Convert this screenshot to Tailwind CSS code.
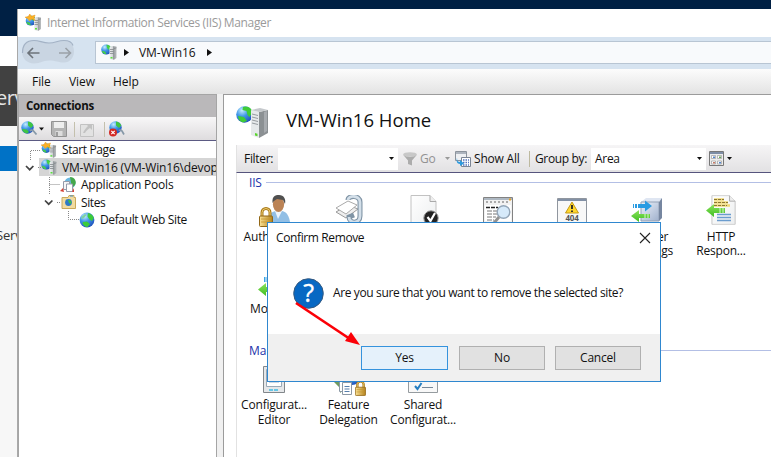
<!DOCTYPE html>
<html lang="en">
<head>
<meta charset="utf-8">
<title>Internet Information Services (IIS) Manager</title>
<script src="https://cdn.jsdelivr.net/npm/@tailwindcss/browser@4"></script>
</head>
<body class="w-[771px] h-[457px] overflow-hidden bg-white font-['Open_Sans','Noto_Sans',sans-serif] text-[12px] leading-[15px] tracking-[-.2px] text-[#111]">
<svg class="absolute w-0 h-0" aria-hidden="true">
  <defs>
    <radialGradient id="gb" cx=".35" cy=".25" r=".9"><stop offset="0" stop-color="#c5eeff"/><stop offset=".4" stop-color="#4298e8"/><stop offset="1" stop-color="#163fb0"/></radialGradient>
    <linearGradient id="sv" x1="0" x2="1"><stop offset="0" stop-color="#f0f2f3"/><stop offset=".5" stop-color="#cdd1d3"/><stop offset=".55" stop-color="#94999c"/><stop offset="1" stop-color="#b9bcbe"/></linearGradient>
    <linearGradient id="gr" x1="0" y1="0" x2="0" y2="1"><stop offset="0" stop-color="#8be35c"/><stop offset="1" stop-color="#3fbe22"/></linearGradient>
    <linearGradient id="gd" x1="0" x2="1"><stop offset="0" stop-color="#fbe397"/><stop offset="1" stop-color="#b3811c"/></linearGradient>
    <linearGradient id="pn" x1="0" y1="0" x2="1" y2="1"><stop offset="0" stop-color="#fff"/><stop offset="1" stop-color="#eceeef"/></linearGradient>
    <linearGradient id="bx" x1="0" y1="0" x2="1" y2="1"><stop offset="0" stop-color="#eef2fa"/><stop offset="1" stop-color="#9fb0cc"/></linearGradient>
    <symbol id="globe" viewBox="0 0 16 16"><circle cx="8" cy="8" r="7.400" fill="url(#gb)"/><path d="M9 1c3 .6 5.200 2.500 5.800 5l-1.800 3-2.500-1.500L8.500 4.500zM4 10l4-.5 3 2.500L8.500 15C6 15 4 13 3.500 11z" fill="#3ccb3a"/><path d="M3 4.500 6 2l1.500 1L5 6 2 7z" fill="#7ed2a0"/></symbol>
    <symbol id="server" viewBox="0 0 16 16"><circle cx="5.200" cy="5.600" r="5" fill="url(#gb)"/><path d="M5.500.800c2 0 4 1.200 4.400 3L8 6 6 4zM1 7l3 .5 1.500 2.800C3 10.300 1 8.500.800 7z" fill="#45d045"/><path d="M8.500 3.500 10.500 2 15.500 2.500v11.500L13 15.800l-4.500-.8z" fill="url(#sv)"/><path d="M9 5.500h3.500M9 7.500h3.500M9 9.500h3.500" stroke="#777c80" stroke-width=".7"/><path d="M13 4.500l2.500-.7" stroke="#7d8286" stroke-width=".7"/><path d="M9.500 13h2v1.500h-2z" fill="#5be23c"/></symbol>
    <symbol id="world" viewBox="0 0 17 16"><circle cx="6.500" cy="6.500" r="6.200" fill="url(#gb)"/><path d="M7 .5c2.500.3 4.500 1.800 5.300 4L10 7 7 4.500zM2 8l4 .5L8 11l-2 1.500C3.500 12.300 1.500 10.500 1 8z" fill="#3fc543"/></symbol>
    <symbol id="doc" viewBox="0 0 30 32"><path d="M1 .5h19l6 6V31.500H1z" fill="url(#pn)" stroke="#c2c2c2"/><path d="M20 .5v6h6" fill="#eee" stroke="#aaa"/></symbol>
    <symbol id="lock" viewBox="0 0 14 20"><path d="M3 10V5.500a4 4 0 0 1 8 0V10" fill="none" stroke="#a87918" stroke-width="3"/><path d="M3 10V5.500a4 4 0 0 1 8 0V10" fill="none" stroke="#f0ce72"/><rect x=".5" y="9" width="13" height="10.500" rx="1" fill="url(#gd)" stroke="#926716"/><path d="M2 12h10M2 15h10" stroke="#c4942e" stroke-width=".8"/></symbol>
    <path id="star" d="M0 3 3 2.400 4.500 0 6 2l3.500-1L8.500 3.800l1 2.200-3-1.200L4 6.500 3.200 4.800z" fill="#fbb026" stroke="#e58f12" stroke-width=".4"/>
  </defs>
</svg>

<div class="relative w-[771px] h-[457px] overflow-hidden flex flex-col">
  <div class="h-[9px] shrink-0 bg-[#002044]"></div>
  <div class="flex flex-1 min-h-0">
    <!-- page behind the window -->
    <aside class="w-[17px] shrink-0 flex flex-col overflow-hidden whitespace-nowrap bg-[#f7f7f7]">
      <div class="h-[27px] bg-[#002044]"></div>
      <div class="h-[30px] bg-white"></div>
      <div class="h-[60px] bg-[#414141] text-[#e4e4e4] text-[20px] leading-[64px] tracking-[-.5px]"><span class="-ml-[4px]">erver</span></div>
      <div class="h-[20px]"></div>
      <div class="h-[25px] bg-[#0072c6]"></div>
      <div class="pt-[57px] text-[13px] text-[#333]"><span class="-ml-[4px]">Server</span></div>
    </aside>

    <main class="flex-1 min-w-0 flex flex-col border-l border-[#a9a9a9] bg-[#f0f0f0]">
      <header class="h-[28px] shrink-0 bg-white flex items-center pl-[7px] pb-px gap-[5px] text-[#9a9a9a]">
        <svg class="w-[17px] h-[17px]" viewBox="0 0 16 16"><use href="#server" y="1" width="16" height="15"/><use href="#star"/></svg>
        <span class="tracking-[-.36px]">Internet Information Services (IIS) Manager</span>
      </header>

      <div class="h-[32px] shrink-0 bg-[#d6e3f0] flex items-start">
        <svg class="w-[77px] h-[32px]" viewBox="18 37 77 32">
          <path d="M34 40.500c6 0 8 2.500 15 2.500s8-2.500 15-2.500c7 0 10 5 10 11s-4 11-10 11c-6 0-8-2-15-2s-8 3-15 3c-7 0-12-5-12-12s5-11 12-11z" fill="#c9d5e2"/>
          <path d="M22.500 53c0-8 4-12.500 11.500-12.500 6 0 8 2.500 15 2.500s8-2.500 15-2.500c5 0 8 2 9 5" fill="none" stroke="#a3b2c5" stroke-width="1.200"/>
          <path d="M39.500 53H28M33 48l-5 5 5 5" fill="none" stroke="#6c737a" stroke-width="1.600"/>
          <path d="M59 53h11.500M65.500 48l5 5-5 5" fill="none" stroke="#9aa1a8" stroke-width="1.600"/>
        </svg>
        <div class="mt-[4px] flex-1 h-[23px] bg-[#f8fafc] border border-r-0 border-[#b8c5d3] flex items-center pl-[5px] pb-px">
          <svg class="w-[16px] h-[16px]"><use href="#server"/></svg>
          <svg class="ml-[7px] w-[5px] h-[7px]" viewBox="0 0 5 7"><path d="M0 0 5 3.500 0 7z" fill="#111"/></svg>
          <span class="ml-[10px] w-[57px] whitespace-nowrap tracking-[-.05px]">VM-Win16</span>
          <svg class="ml-[11px] w-[5px] h-[7px]" viewBox="0 0 5 7"><path d="M0 0 5 3.500 0 7z" fill="#111"/></svg>
        </div>
      </div>

      <nav class="h-[25px] shrink-0 bg-linear-to-b from-[#fcfcfc] to-[#e3e3e3] flex items-center pl-[14px] pb-px tracking-[-.05px]">
        <span class="w-[37px]">File</span><span class="w-[44px]">View</span><span>Help</span>
      </nav>

      <div class="flex flex-1 min-h-0">
        <!-- connections -->
        <section class="w-[199px] shrink-0 flex flex-col bg-white border-x border-t border-[#a5a5a5] overflow-hidden">
          <div class="h-[22px] shrink-0 bg-[#bab8ba] pl-[7px] font-bold text-[11.500px] leading-[22px] tracking-[-.3px]">Connections</div>
          <div class="h-[24px] shrink-0 bg-linear-to-b from-[#f8f7f8] to-[#dedcde] border-b border-[#5b5a83]">
            <svg class="w-[110px] h-[23px]" viewBox="19 117 110 23">
              <g transform="translate(21 121)"><svg width="17" height="16"><use href="#world"/></svg></g>
              <path d="M30 131c1.500-1.500 3-1 3.500 0l3 3.500" fill="none" stroke="#8799a8" stroke-width="1.800"/>
              <path d="M39 127.500h5l-2.500 3z" fill="#111"/>
              <path d="M51.500 121.500h15v15h-13l-2-2z" fill="#b4b4b4" stroke="#939393"/><path d="M54 122h10v6H54z" fill="#eee"/><path d="M55.500 131h7v5h-7z" fill="#ddd"/><path d="M57 132v4" stroke="#888" stroke-width="1.500"/>
              <path d="M74.500 122v15M104.500 122v15" stroke="#c4c0ad"/>
              <path d="M80.500 124.500h13v12h-13z" fill="#e2e2e2" stroke="#c2c2c2"/><path d="M83 133c1-3 3-5 5-7l-2-2h6v6l-2-2c-2 1-4 3-5 5z" fill="#c2c2c2"/>
              <g transform="translate(109 121)"><svg width="17" height="16"><use href="#world"/></svg></g>
              <path d="M119 131c1-1.500 2.500-1 3 0l2 3.500" fill="none" stroke="#8799a8" stroke-width="1.700"/>
              <circle cx="113" cy="132.500" r="4" fill="#d32924"/><path d="m111.300 130.800 3.400 3.400m0-3.400-3.400 3.400" stroke="#fff" stroke-width="1.200"/>
            </svg>
          </div>
          <div class="relative whitespace-nowrap">
            <div class="h-[17px] flex items-center pl-[22px] gap-[5px]"><svg class="w-[16px] h-[16px] shrink-0" viewBox="0 0 16 16"><use href="#server" y="1" width="16" height="15"/><use href="#star"/></svg><span class="tracking-[-.4px]">Start Page</span></div>
            <div class="h-[18px] ml-[20px] bg-[#d5d5d5] flex items-center pl-[2px] gap-[5px]"><svg class="w-[16px] h-[16px] shrink-0"><use href="#server"/></svg><span class="tracking-[-.17px]">VM-Win16 (VM-Win16\devops)</span></div>
            <div class="h-[17px] flex items-center pl-[41px] gap-[4px]">
              <svg class="w-[17px] h-[16px]" viewBox="0 0 17 16"><circle cx="10" cy="6" r="5.500" fill="#6ab8e0"/><path d="M10 0c5 0 7 5 5 8l-3 3z" fill="#45a84b"/><path d="M3.500 4.500h6v8h-6z" fill="#f5f6f8" stroke="#959baa"/><path d="M6.500 7h6v7.500h-6z" fill="#fff" stroke="#959baa"/><path d="m0 14 3-3 1 4zm12 1 2-4v4z" fill="#d64034"/></svg><span class="tracking-[-.22px]">Application Pools</span></div>
            <div class="h-[18px] flex items-center pl-[42px] gap-[4px]">
              <svg class="w-[16px] h-[16px]" viewBox="0 0 16 16"><path d="M1 3.500h6l1-2h5v2h1.500v11H1z" fill="#f1dba0" stroke="#c9a95a"/><path d="M9 2h3" stroke="#4b90ca"/><circle cx="7.500" cy="8.500" r="3.400" fill="#2e79c6"/><path d="M7 6c3 0 4 2 3 4L8 9z" fill="#42bf42"/></svg><span class="tracking-[-.4px]">Sites</span></div>
            <div class="h-[17px] flex items-center pl-[60px] gap-[5px]"><svg class="w-[16px] h-[16px]"><use href="#globe"/></svg><span class="tracking-[-.37px]">Default Web Site</span></div>
            <svg class="absolute left-0 top-0 w-[62px] h-[90px]" viewBox="19 141 62 90" fill="none">
              <path d="M30.500 160v-9.500H41M38 167.500h3M49.500 177v17M49.500 184.500H60M57 202.500h4M68.500 211v8.500H79" stroke="#888" stroke-dasharray="1 1"/>
              <path d="m26 166 3.700 3.700 3.700-3.700M45 200.500l3.700 3.700 3.700-3.700" stroke="#444" stroke-width="1.700"/>
            </svg>
          </div>
        </section>

        <!-- feature view -->
        <section class="ml-[6px] flex-1 min-w-0 bg-white border-l border-t border-[#9b9b9b] flex flex-col pl-[12px]">
          <div class="h-[50px] shrink-0 flex items-center">
            <svg class="w-[35px] h-[34px] mt-[3px]" viewBox="0 0 35 34">
              <circle cx="8.500" cy="9.500" r="8.300" fill="url(#gb)"/><path d="M7 2c5-2 9 2 9.500 5l-3 5-2-2-1-4-4-1zM2 11l6 1 3 4-4 1.500c-3-1-5-3-5-6.500z" fill="#3fcb38"/>
              <path d="m15 5 8 2v26l-8-3z" fill="#e6e9eb"/><path d="m23 7 9-2v23l-9 5z" fill="#8b9093"/><path d="m15 5 9-2L32 5l-9 2z" fill="#c5c9cc"/><path d="m16 9 6 1.500M16 12l6 1.500M16 15l6 1.500M16 18l6 1.500" stroke="#969b9f"/><path d="m28 7 3-1v20l-3 2z" fill="#a7abaf"/><path d="m19 28 2.500.7v2.500L19 30.500z" fill="#59d52c"/>
            </svg>
            <h1 class="ml-[15px] text-[18.500px] leading-[24px] tracking-[.02px]">VM-Win16 Home</h1>
          </div>
          <div class="h-[28px] shrink-0 border-l border-[#e2e2e2] bg-linear-to-b from-[#f6f5f6] to-[#e2e1e3] border-b border-b-[#55547d] flex items-center whitespace-nowrap">
            <span class="ml-[7px] w-[34px] tracking-[-.3px]">Filter:</span>
            <div class="w-[120px] h-[22px] bg-white flex items-center justify-end pr-[4px]"><svg class="w-[5px] h-[3px]" viewBox="0 0 5 3"><path d="M0 0h5L2.500 3z" fill="#111"/></svg></div>
            <svg class="ml-[5px] w-[14px] h-[14px]" viewBox="0 0 14 14"><ellipse cx="7" cy="2.500" rx="6.800" ry="2.300" fill="#c8c8c8"/><path d="M.3 3 5 8.500V12l4 1.500v-5L13.700 3C11 5.500 3 5.500.3 3z" fill="#acacac"/></svg>
            <span class="ml-[3px] w-[25px] text-[#929292]">Go</span>
            <svg class="w-[5px] h-[3px]" viewBox="0 0 5 3"><path d="M0 0h5L2.500 3z" fill="#999"/></svg>
            <svg class="ml-[5px] w-[16px] h-[16px]" viewBox="0 0 16 16"><path d="M.5.500h11v9H.500z" fill="#eef0f3" stroke="#8c939c"/><path d="M1 2h10" stroke="#adb4be" stroke-width="2"/><path d="M6.500 6.500h9v9h-9z" fill="#fff" stroke="#7b8594"/><path d="M8 9h6M8 11.500h6M8 14h6" stroke="#5473bc" stroke-width="1.500" stroke-dasharray="1.500 1"/><path d="M2 7c0 3 1 4 3 4V9l4 3.500L5 15v-2c-3 0-4-3-3-6z" fill="#2d9ade"/></svg>
            <span class="ml-[3px] w-[55px] tracking-[-.2px]">Show All</span>
            <div class="w-px h-[16px] bg-[#bdb99f]"></div>
            <span class="ml-[5px] w-[56px] tracking-[-.35px]">Group by:</span>
            <div class="w-[115px] h-[22px] bg-white flex items-center justify-between pl-[4px] pr-[4px]"><span class="tracking-[-.3px]">Area</span><svg class="w-[5px] h-[3px]" viewBox="0 0 5 3"><path d="M0 0h5L2.500 3z" fill="#111"/></svg></div>
            <svg class="ml-[3px] w-[15px] h-[15px]" viewBox="0 0 15 15"><path d="M.5.500h14v14H.500z" fill="#ececec" stroke="#777"/><path d="M1 2h13" stroke="#7d8da6" stroke-width="2"/><path d="M2.500 4.500h4v3h-4zM8.500 4.500h4v3h-4zM2.500 10h4v3h-4zM8.500 10h4v3h-4z" fill="#fff" stroke="#8e8e8e" stroke-width=".6"/><path d="M4 5.500h2v1.500H4zM10 11h2v1.500h-2z" fill="#5385cf"/><path d="M10 5.500h2v1.500h-2z" fill="#68a957"/><path d="M4 11h2v1.500H4z" fill="#c77b67"/></svg>
            <svg class="ml-[3px] w-[5px] h-[3px]" viewBox="0 0 5 3"><path d="M0 0h5L2.500 3z" fill="#111"/></svg>
          </div>

          <div class="flex-1 border-l border-[#e2e2e2] flex flex-col">
            <div class="h-[19px] shrink-0 flex items-center pl-[12px] gap-[4px] text-[#2233aa]"><span class="leading-[19px]">IIS</span><i class="h-px flex-1 bg-[#b3bfe5]"></i></div>
            <div class="pt-[3px] h-[73px] shrink-0 flex text-center whitespace-nowrap">
              <div class="w-[74px] shrink-0 flex flex-col items-center">
                <svg class="w-[34px] h-[34px]" viewBox="0 0 34 34"><path d="M11 34V23c1-5 5-7 9-7h5c5 1 7 5 8 11v7z" fill="#92bfe5"/><path d="m18 16 3 8 4-8z" fill="#eef5fb"/><ellipse cx="21.500" cy="9.500" rx="5.600" ry="7.500" fill="#bb8356"/><path d="M15.500 8C15 1 18 0 22 0c5 0 7 4 6 9l-2-4-6-1-3 2z" fill="#505050"/><svg x="2" y="12" width="14" height="20"><use href="#lock"/></svg></svg>
                <span class="leading-[14px] pt-[1px]">Authentic...</span>
              </div>
              <div class="w-[75px] shrink-0 flex flex-col items-center">
                <svg class="w-[32px] h-[34px]" viewBox="0 0 32 34"><path d="m3 17 12-7 10 4-12 9z" fill="#eee" stroke="#9a9a9a"/><path d="m3 13 12-7 9 4-11 9z" fill="#fff" stroke="#aaa"/><path d="M15 5c0-5 12-5 12 2v14c0 8-11 8-11 1l5-2" fill="none" stroke="#8094a5" stroke-width="5"/><path d="M15 5c0-5 12-5 12 2v14c0 8-11 8-11 1" fill="none" stroke="#d3dfe9" stroke-width="2.800"/></svg>
              </div>
              <div class="w-[74px] shrink-0 flex flex-col items-center">
                <svg class="w-[32px] h-[34px]" viewBox="0 0 32 34"><svg x="3" y="0" width="27" height="32" viewBox="0 0 27 32"><use href="#doc" width="30" height="32"/></svg><circle cx="24" cy="23" r="7.200" fill="#222" stroke="#999"/><path d="m20.500 22 3 4 4.500-8" fill="none" stroke="#fff" stroke-width="2.200"/></svg>
              </div>
              <div class="w-[75px] shrink-0 flex flex-col items-center">
                <svg class="w-[32px] h-[34px]" viewBox="0 0 32 34"><path d="M1.500 2.500h29v25h-29z" fill="#f2f2f2" stroke="#828282"/><path d="M2 4h28" stroke="#aeb8c2" stroke-width="2"/><path d="M4 7h22" stroke="#aaa" stroke-width="2" stroke-dasharray="2 2"/><path d="M3 10h26v16H3z" fill="#fff"/><path d="M4 12.500h12" stroke="#222" stroke-width="1.500" stroke-dasharray="4 1"/><path d="M5 16h10M5 19h10M5 22h9M5 25h7" stroke="#777" stroke-dasharray="5 1"/><circle cx="21.500" cy="17" r="6.300" fill="#d6eafa" stroke="#94a6b8" stroke-width="1.400"/><path d="m17 22-5 6" stroke="#929292" stroke-width="3"/><path d="M27 4.500h2" stroke="#e6a323" stroke-width="2"/></svg>
              </div>
              <div class="w-[74px] shrink-0 flex flex-col items-center">
                <svg class="w-[32px] h-[34px]" viewBox="0 0 32 34"><path d="M1.500 3.500h29v24h-29z" fill="#f8f8f8" stroke="#90969f"/><path d="M2 5h28" stroke="#8290a5" stroke-width="2"/><path d="m16 7 6.500 11h-13z" fill="#ffd72c" stroke="#c59a19" stroke-linejoin="round"/><path d="M16 10v4M16 15.500v1.500" stroke="#222" stroke-width="1.800"/><text x="16" y="26" text-anchor="middle" font-family="Open Sans" font-size="8" font-weight="700" fill="#555">404</text></svg>
              </div>
              <div class="w-[75px] shrink-0 flex flex-col items-center">
                <svg class="w-[34px] h-[34px]" viewBox="0 0 34 34"><path d="m11 7 5-4h16l-3 4z" fill="#dfe6f2"/><path d="M11 7h18v19H11z" fill="url(#bx)" stroke="#93a1b5"/><path d="m29 7 3-4v20l-3 3z" fill="#7686a0"/><path d="M3 9h12V5.500l7 5.500-7 5.500V13H3z" fill="#299be2"/><path d="M4.500 9v4M7.500 9v4" stroke="#fff"/><path d="M20 19H9v-4L1 21l8 6v-4h11z" fill="url(#gr)"/><path d="M15 19v4M18 19v4" stroke="#d5f7c8"/></svg>
                <div class="leading-[14px] pt-[1px]">Handler<br>Mappings</div>
              </div>
              <div class="w-[74px] shrink-0 flex flex-col items-center">
                <svg class="w-[32px] h-[34px]" viewBox="0 0 32 34"><svg x="6" y="0" width="26" height="30" viewBox="0 0 28 32"><use href="#doc" width="30" height="32"/></svg><path d="M9 4.500h10M9 7.500h14M9 10.500h16" stroke="#efd976" stroke-width="2.500"/><path d="M9 4.500h10M9 7.500h14M9 10.500h13" stroke="#725e20" stroke-width=".8" stroke-dasharray="3 1"/><path d="M12 19.500h14M12 22.500h14M12 25.500h14" stroke="#6b9cce" stroke-width="1.300"/><path d="M20 13H9V9l-8 6.500L9 22v-4h11z" fill="url(#gr)"/><path d="M15 13v5M18 13v5" stroke="#d7f7cb"/></svg>
                <div class="leading-[14px] pt-[1px]">HTTP<br>Respon...</div>
              </div>
            </div>
            <div class="h-[76px] shrink-0 flex pt-[11px]">
              <div class="w-[74px] flex flex-col items-center">
                <svg class="w-[34px] h-[26px]" viewBox="0 0 34 26"><path d="M7 1h1.500v5H7zM9.500 1h9v5h-9z" fill="#3aa5e4"/><path d="M20 11H9V7l-8 6.500L9 20v-4h11z" fill="url(#gr)"/></svg>
                <span class="leading-[14px] tracking-[0px]">Modules</span>
              </div>
            </div>
            <div class="h-[19px] shrink-0 flex items-center pl-[12px] gap-[4px] text-[#2233aa]"><span class="tracking-[0px]">Management</span><i class="h-px flex-1 bg-[#b3bfe5]"></i></div>
            <div class="pt-[4px] flex text-center whitespace-nowrap leading-[15px]">
              <div class="w-[74px] flex flex-col items-center"><svg class="w-[32px] h-[33px]" viewBox="0 0 32 33"><path d="M5.500 2.500h21v26h-21z" fill="#e5e7e9" stroke="#82878b"/><path d="M8.500 5.500h15v17h-15z" fill="#fff" stroke="#9aa9b7"/><path d="M11 9h10M11 12h10M11 15h10M11 18h10" stroke="#9db2c8"/><path d="M11 26h9" stroke="#3dbce5" stroke-width="1.500" stroke-dasharray="4 1"/></svg><div>Configurat...<br>Editor</div></div>
              <div class="w-[75px] flex flex-col items-center"><svg class="w-[34px] h-[33px]" viewBox="0 0 34 33"><circle cx="20" cy="13" r="8" fill="url(#gb)"/><path d="M2 18h6v-3l8 7-8 7v-5z" fill="#709b62"/><path d="M7.500 16.500h9v11h-9z" fill="#fff" stroke="#8b98a5"/><path d="M10.500 30.500h9v-12h-9z" fill="#fff" stroke="#8b98a5"/><path d="M12.500 22.500h5M12.500 25h5M12.500 27.500h5" stroke="#577fac"/><svg x="23" y="16" width="11" height="16"><use href="#lock" width="11" height="16"/></svg></svg><div>Feature<br>Delegation</div></div>
              <div class="w-[74px] flex flex-col items-center"><svg class="w-[32px] h-[33px]" viewBox="0 0 32 33"><path d="M1.500 3.500h29v25h-29z" fill="#f8f8f8" stroke="#959b9f"/><path d="m8 22 2.500 3 4-6" fill="none" stroke="#287fc1" stroke-width="2"/><path d="M15 23.500h11" stroke="#778899"/></svg><div>Shared<br>Configurat...</div></div>
            </div>
          </div>
        </section>
      </div>
    </main>
  </div>

  <!-- confirmation dialog -->
  <div role="dialog" class="absolute left-[267px] top-[222px] w-[394px] h-[160px] border border-[#2f87cf] bg-white flex flex-col">
    <div class="h-[29px] flex items-center justify-between pl-[8px] pr-[9px]"><span class="tracking-[-.38px]">Confirm Remove</span><svg class="w-[12px] h-[12px]" viewBox="0 0 12 12"><path d="m1 1 10 10M11 1 1 11" stroke="#222" stroke-width="1.100"/></svg></div>
    <div class="flex-1 flex items-center pl-[25px] gap-[8px]">
      <svg class="w-[31px] h-[31px]" viewBox="0 0 31 31"><circle cx="15.500" cy="15.500" r="14.800" fill="#0768c3" stroke="#36597e"/><text x="15.500" y="24" text-anchor="middle" font-family="Open Sans" font-size="25" fill="#fff" stroke="#fff" stroke-width=".4">?</text></svg>
      <span class="whitespace-nowrap tracking-[-.37px] ml-px pb-px">Are you sure that you want to remove the selected site?</span>
    </div>
    <div class="h-[47px] bg-[#f0f0f0] flex items-start pt-[12px] pl-[93px] leading-[21px] text-center">
      <div class="w-[87px] h-[24px] border border-[#3593dd] bg-[#e5f1fb]">Yes</div>
      <div class="ml-[11px] w-[86px] h-[24px] border border-[#b0b0b0] bg-[#e1e1e1]">No</div>
      <div class="ml-[10px] w-[86px] h-[24px] border border-[#b0b0b0] bg-[#e1e1e1]">Cancel</div>
    </div>
  </div>
  <svg class="absolute left-[290px] top-[296px] w-[75px] h-[52px]" viewBox="290 296 75 52"><path d="m296 303 54 36" stroke="#fb0007" stroke-width="2.600"/><path d="m360 345-15-4 6-9z" fill="#fb0007"/></svg>
</div>
</body>
</html>
